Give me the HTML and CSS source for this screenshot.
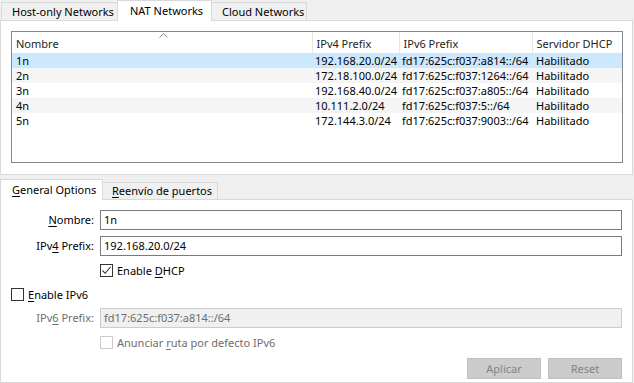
FILE: index.html
```html
<!DOCTYPE html>
<html lang="es">
<head>
<meta charset="UTF-8">
<title>NAT Networks</title>
<link rel="stylesheet" href="styles.css">
</head>
<body>

<div class="tabs top-tabs">
  <div class="tab tab-host">Host-only Networks</div>
  <div class="tab tab-nat active">NAT Networks</div>
  <div class="tab tab-cloud">Cloud Networks</div>
</div>

<div class="panel list-panel">
  <div class="tree">
    <table class="grid">
      <thead>
        <tr>
          <th class="col-name">Nombre
            <svg class="sort" width="9" height="5" viewBox="0 0 9 5"><path d="M0.5 4.5 L4.5 0.5 L8.5 4.5" fill="none" stroke="#8a8a8a" stroke-width="1"/></svg>
          </th>
          <th class="col-v4">IPv4 Prefix</th>
          <th class="col-v6">IPv6 Prefix</th>
          <th class="col-dhcp">Servidor DHCP</th>
        </tr>
      </thead>
      <tbody>
        <tr class="selected"><td>1n</td><td>192.168.20.0/24</td><td>fd17:625c:f037:a814::/64</td><td>Habilitado</td></tr>
        <tr class="alt"><td>2n</td><td>172.18.100.0/24</td><td>fd17:625c:f037:1264::/64</td><td>Habilitado</td></tr>
        <tr><td>3n</td><td>192.168.40.0/24</td><td>fd17:625c:f037:a805::/64</td><td>Habilitado</td></tr>
        <tr class="alt"><td>4n</td><td>10.111.2.0/24</td><td>fd17:625c:f037:5::/64</td><td>Habilitado</td></tr>
        <tr><td>5n</td><td>172.144.3.0/24</td><td>fd17:625c:f037:9003::/64</td><td>Habilitado</td></tr>
      </tbody>
    </table>
  </div>
</div>

<div class="tabs bottom-tabs">
  <div class="tab tab-general active"><u>G</u>eneral Options</div>
  <div class="tab tab-ports"><u>R</u>eenvío de puertos</div>
</div>

<div class="panel form-panel">
  <div class="row row-input">
    <label class="lbl"><u>N</u>ombre:</label>
    <div class="field">1n</div>
  </div>

  <div class="row row-input row-v4">
    <label class="lbl">IPv<u>4</u> Prefix:</label>
    <div class="field">192.168.20.0/24</div>
  </div>

  <div class="row row-check row-dhcp">
    <span class="box"><svg width="11" height="11" viewBox="0 0 11 11"><path d="M1.5 5.5 L4.2 8.3 L9.5 2" fill="none" stroke="#333" stroke-width="1.1"/></svg></span>
    <span class="check-text">Enable <u>D</u>HCP</span>
  </div>

  <div class="row row-check row-v6">
    <span class="box"></span>
    <span class="check-text"><u>E</u>nable IPv6</span>
  </div>

  <div class="row row-input row-prefix disabled">
    <label class="lbl">IPv<u>6</u> Prefix:</label>
    <div class="field">fd17:625c:f037:a814::/64</div>
  </div>

  <div class="row row-check row-route disabled">
    <span class="box"></span>
    <span class="check-text">Anunciar <u>r</u>uta por defecto IPv6</span>
  </div>

  <div class="buttons">
    <button disabled>Aplicar</button>
    <button disabled>Reset</button>
  </div>
</div>

</body>
</html>
```

FILE: styles.css
```css
/* Base */
body {
  margin: 0;
  background-color: #f0f0f0;
  font-family: "Noto Sans", "Open Sans", sans-serif;
  font-size: 11px;
  color: #000;
  width: 634px;
  height: 383px;
  overflow: hidden;
}

u {
  text-decoration-thickness: 1px;
  text-underline-offset: 2px;
}

/* Tabs */
.tabs {
  display: flex;
  align-items: flex-end;
  position: relative;
  z-index: 1;
  height: 20px;
}

.tab {
  box-sizing: border-box;
  height: 18px;
  line-height: 17px;
  padding: 0 0 0 10px;
  background-color: #f0f0f0;
  border: 1px solid #d9d9d9;
  border-bottom: none;
  white-space: nowrap;
}

.tab + .tab {
  border-left: none;
}

.tab.active {
  height: 21px;
  line-height: 19px;
  background-color: #fff;
  margin-bottom: -1px;
  border-left: 1px solid #d9d9d9;
}

.tab.active + .tab {
  border-left: none;
}

.top-tabs .tab-host {
  width: 117px;
  margin-left: 1px;
}

.top-tabs .tab-nat {
  width: 95px;
  margin-left: -1px;
  padding-left: 12px;
}

.top-tabs .tab-cloud {
  width: 95px;
}

.bottom-tabs {
  margin-top: 4px;
}

.bottom-tabs .tab-general {
  width: 103px;
  padding-left: 11px;
}

.bottom-tabs .tab-ports {
  width: 115px;
  height: 17px;
  line-height: 16px;
  padding-left: 9px;
}

/* Panels */
.panel {
  box-sizing: border-box;
  width: 633px;
  background-color: #fff;
  border: 1px solid #d9d9d9;
}

.list-panel {
  height: 155px;
  padding: 10px 9px 11px 10px;
}

.form-panel {
  height: 184px;
  padding: 10px 10px 0 0;
}

/* List view */
.tree {
  box-sizing: border-box;
  height: 132px;
  border: 1px solid #828790;
  background-color: #fff;
  overflow: hidden;
}

.grid {
  border-collapse: collapse;
  table-layout: fixed;
  width: 610px;
}

.grid th {
  position: relative;
  height: 21px;
  padding: 2px 0 0 4px;
  box-sizing: border-box;
  font-weight: normal;
  text-align: left;
  border-right: 1px solid #e5e5e5;
  white-space: nowrap;
  color: #1e1e1e;
}

.grid th:last-child {
  border-right: none;
}

.grid td {
  height: 15px;
  padding: 0 0 0 4px;
  line-height: 14px;
  white-space: nowrap;
  overflow: hidden;
}

.grid td:nth-child(2),
.grid td:nth-child(3) {
  padding-left: 3px;
}

.col-name { width: 300px; }
.col-v4 { width: 87px; }
.col-v6 { width: 133px; }
.col-dhcp { width: 90px; }

.sort {
  position: absolute;
  left: 147px;
  top: 1px;
}

.grid tr.alt td {
  background-color: #f5f5f5;
}

.grid tr.selected td {
  background-color: #cce8ff;
}

/* Form rows */
.row {
  display: flex;
  align-items: center;
}

.row-input {
  height: 20px;
  gap: 6px;
}

.row-check {
  height: 13px;
  gap: 4px;
}

.row-v4 { margin-top: 6px; }
.row-dhcp { margin: 8px 0 0 99px; }
.row-v6 { margin: 11px 0 0 10px; }
.row-prefix { margin-top: 7px; }
.row-route { margin: 8px 0 0 99px; }

.lbl {
  width: 93px;
  text-align: right;
  line-height: 20px;
}

.field {
  box-sizing: border-box;
  flex: 1;
  height: 20px;
  line-height: 18px;
  padding: 0 3px;
  border: 1px solid #7a7a7a;
  background-color: #fff;
}

.check-text {
  line-height: 13px;
  white-space: nowrap;
}

.box {
  box-sizing: border-box;
  width: 13px;
  height: 13px;
  border: 1px solid #333;
  background-color: #fff;
  display: flex;
  align-items: center;
  justify-content: center;
}

/* Disabled state */
.disabled .lbl,
.disabled .check-text {
  color: #6d6d6d;
}

.disabled .field {
  background-color: #f0f0f0;
  border-color: #cccccc;
  color: #6d6d6d;
}

.disabled .box {
  border-color: #cccccc;
}

/* Buttons */
.buttons {
  display: flex;
  justify-content: flex-end;
  gap: 7px;
  margin-top: 9px;
}

button {
  width: 74px;
  height: 21px;
  padding: 0;
  background-color: #cccccc;
  border: 1px solid #bfbfbf;
  color: #838383;
  font-family: inherit;
  font-size: 11px;
}
```
